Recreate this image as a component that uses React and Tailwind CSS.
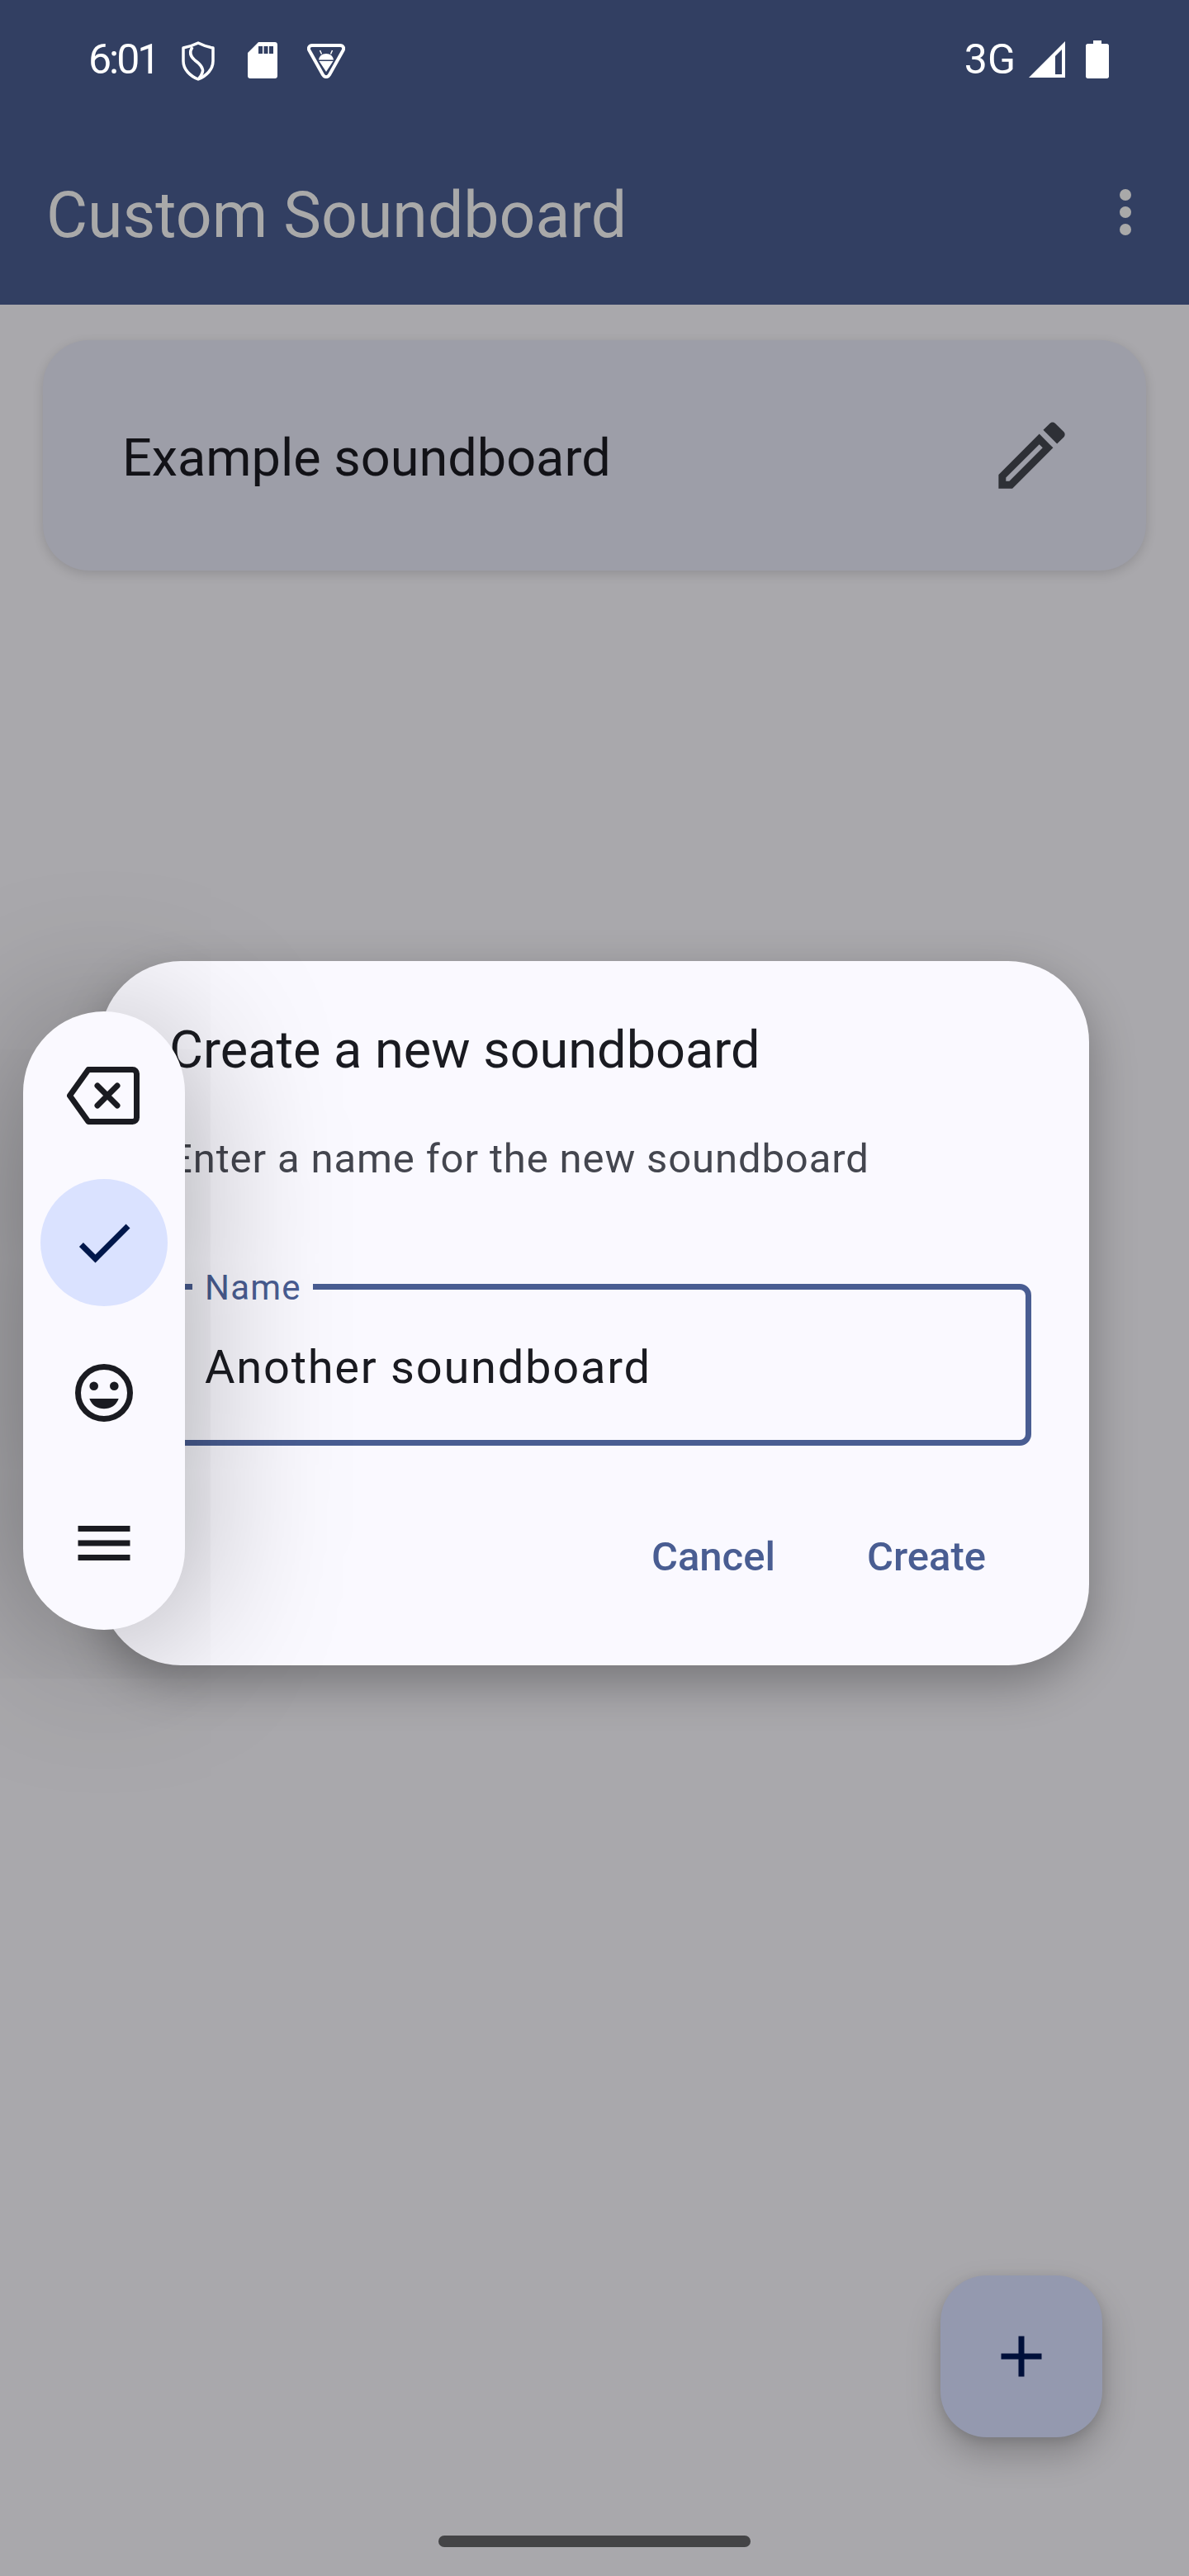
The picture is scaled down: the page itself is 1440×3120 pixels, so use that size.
const ink = '#1a1b21'

function StatusBar() {
  return (
    <div className="h-[144px] flex items-center justify-between pl-[107px] pr-[97px] text-white">
      <div className="flex items-center">
        <span className="text-[50px] leading-[56px] w-[88px] tracking-[-3px] whitespace-nowrap">6:01</span>
        <svg className="ml-[25px] mt-[4px]" width="40" height="48" viewBox="0 0 40 48" fill="none" stroke="white" strokeWidth="3.5">
          <path d="M20 2C26 5 32 7 38 8V24C38 34 30 42 20 46C10 42 2 34 2 24V8C8 7 14 5 20 2Z" strokeLinejoin="round" />
          <path d="M13 7C9 13 10 18 16 23C23 28 27 33 25 38C24 42 22 44 20 46" />
        </svg>
        <svg className="ml-[40px] mt-[2px]" width="36" height="44" viewBox="0 0 36 44" fill="white">
          <path fillRule="evenodd" d="M13 0H33C34.7 0 36 1.3 36 3V41C36 42.7 34.7 44 33 44H3C1.3 44 0 42.7 0 41V13ZM13 5V14H18V5ZM19.5 5V14H24.5V5ZM26 5V14H31V5Z" />
        </svg>
        <svg className="ml-[36px] mt-[4px]" width="46" height="42" viewBox="0 0 46 42" fill="none">
          <path d="M6 2H40C43.5 2 45 5 43.5 8L27 37.5C25 41 21 41 19 37.5L2.5 8C1 5 2.5 2 6 2Z" stroke="white" strokeWidth="4" strokeLinejoin="round" />
          <path d="M14 19.5C14.5 15 18 12 23 12S31.5 15 32 19.5ZM14.5 21H31.5L23 34Z" fill="white" />
          <path d="M17.5 12.5L15.5 8M28.5 12.5L30.5 8" stroke="white" strokeWidth="1.5" />
        </svg>
      </div>
      <div className="flex items-center">
        <span className="text-[50px] leading-[56px]">3G</span>
        <svg className="ml-[16px]" width="44" height="44" viewBox="0 0 44 44" fill="white">
          <path fillRule="evenodd" d="M0 44L44 0V44ZM32 40H40V10L32 18Z" />
        </svg>
        <svg className="ml-[25px]" width="28" height="46" viewBox="0 0 28 46" fill="white">
          <path d="M9 0H19V4H25.5C27 4 28 5 28 6.5V43.5C28 45 27 46 25.5 46H2.5C1 46 0 45 0 43.5V6.5C0 5 1 4 2.5 4H9Z" />
        </svg>
      </div>
    </div>
  )
}

function AppBar() {
  return (
    <header className="bg-[#323f62] flex flex-col">
      <StatusBar />
      <div className="h-[225px] flex items-center justify-between pl-[56px] pr-[70px]">
        <h1 className="text-[77px] leading-[90px] pt-[8px] text-[#a9a9a9] font-normal">Custom Soundboard</h1>
        <svg width="14" height="56" viewBox="0 0 14 56" fill="#a9a9a9">
          <circle cx="7" cy="7" r="7" />
          <circle cx="7" cy="28" r="7" />
          <circle cx="7" cy="49" r="7" />
        </svg>
      </div>
    </header>
  )
}

function SoundboardCard() {
  return (
    <div className="mt-[43px] ml-[52px] w-[1336px] h-[279px] rounded-[56px] bg-[#9d9ea8] shadow-[0_4px_14px_rgba(0,0,0,0.14)] flex items-center justify-between pl-[96px] pr-[85px]">
      <span className="text-[63px] leading-[84px] pt-[6px] text-[#121217]">Example soundboard</span>
      <svg width="107" height="107" viewBox="0 0 24 24" fill="#2e3036">
        <path d="M3 17.25V21h3.75L17.81 9.94l-3.75-3.75L3 17.25zM5.92 19H5v-.92l9.06-9.06.92.92L5.92 19zM20.71 5.63l-2.34-2.34c-.2-.2-.45-.29-.71-.29s-.51.09-.7.29l-1.83 1.83 3.75 3.75 1.83-1.83c.39-.39.39-1.02 0-1.41z" />
      </svg>
    </div>
  )
}

function Dialog() {
  return (
    <div className="absolute left-[121px] top-[1164px] w-[1198px] rounded-[98px] bg-[#faf9ff] shadow-[0_21px_56px_rgba(0,0,0,0.3)] px-[70px] pt-[66px] pb-[96px]">
      <h2 className="pl-[14px] text-[63px] leading-[84px] font-normal text-[#1a1b21]">Create a new soundboard</h2>
      <p className="pl-[14px] mt-[55px] text-[49px] leading-[70px] tracking-[0.875px] text-[#44464f]">Enter a name for the new soundboard</p>
      <div className="relative mt-[116px] h-[196px] rounded-[14px] border-[7px] border-[#495d92] flex items-center pl-[50px] pt-[6px]">
        <span className="absolute left-[35px] top-[-23px] bg-[#faf9ff] pl-[15px] pr-[14px] text-[42px] leading-[42px] tracking-[1.2px] text-[#495d92]">Name</span>
        <span className="text-[56px] leading-[70px] tracking-[1.75px] text-[#1a1b21]">Another soundboard</span>
      </div>
      <div className="mt-[100px] flex justify-end gap-[111px] pr-[55px] text-[49px] leading-[70px] font-medium text-[#495d92]">
        <span>Cancel</span>
        <span>Create</span>
      </div>
    </div>
  )
}

function ToolPanel() {
  return (
    <div className="absolute left-[28px] top-[1225px] w-[196px] h-[749px] rounded-[98px] bg-[#faf9ff] shadow-[0_14px_184px_rgba(0,0,0,0.36)] flex flex-col items-center pt-[27px] gap-[28px]">
      <div className="h-[148px] flex items-center justify-center">
        <svg className="mr-[2px] mt-[2px]" width="88" height="70" viewBox="0 0 88 70" fill="none" stroke={ink} strokeWidth="7">
          <path d="M3.5 35L26 3.5H79.5C82.5 3.5 84.5 5.5 84.5 8.5V61.5C84.5 64.5 82.5 66.5 79.5 66.5H26Z" strokeLinejoin="round" />
          <path d="M37 23L61 47M61 23L37 47" strokeLinecap="round" />
        </svg>
      </div>
      <div className="w-[154px] h-[154px] rounded-full bg-[#dae2ff] flex items-center justify-center">
        <svg width="84" height="84" viewBox="0 0 24 24" fill="#00174b">
          <path d="M9 16.17L4.83 12l-1.42 1.41L9 19 21 7l-1.41-1.41z" />
        </svg>
      </div>
      <div className="h-[154px] flex items-center justify-center">
        <svg width="70" height="70" viewBox="0 0 70 70" fill={ink}>
          <circle cx="35" cy="35" r="31.5" fill="none" stroke={ink} strokeWidth="7" />
          <circle cx="22.7" cy="26.7" r="5.3" />
          <circle cx="47.3" cy="26.7" r="5.3" />
          <path d="M17.3 42H52.7C50 50 43 54.3 35 54.3S20 50 17.3 42Z" />
        </svg>
      </div>
      <div className="h-[154px] flex items-center justify-center">
        <svg width="84" height="84" viewBox="0 0 24 24" fill={ink}>
          <path d="M3 18h18v-2H3v2zm0-5h18v-2H3v2zm0-7v2h18V6H3z" />
        </svg>
      </div>
    </div>
  )
}

function Fab() {
  return (
    <div className="absolute left-[1139px] top-[2756px] w-[196px] h-[196px] rounded-[56px] bg-[#9499af] shadow-[0_21px_42px_rgba(0,0,0,0.22),0_4px_14px_rgba(0,0,0,0.12)] flex items-center justify-center">
      <svg width="84" height="84" viewBox="0 0 24 24" fill="#00103a">
        <path d="M19 13h-6v6h-2v-6H5v-2h6V5h2v6h6v2z" />
      </svg>
    </div>
  )
}

export default function App() {
  return (
    <div className="relative w-[1440px] h-[3120px] overflow-hidden bg-[#a9a8ac] font-['Roboto',sans-serif] flex flex-col">
      <AppBar />
      <main className="flex-1">
        <SoundboardCard />
      </main>
      <div className="self-center w-[378px] h-[14px] mb-[35px] rounded-full bg-[#444446]" />
      <Fab />
      <Dialog />
      <ToolPanel />
    </div>
  )
}
